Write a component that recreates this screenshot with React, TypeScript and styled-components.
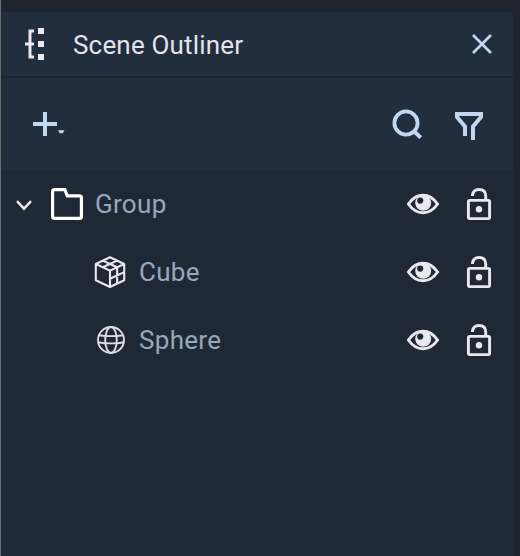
import React from "react";
import styled, { createGlobalStyle } from "styled-components";

const GlobalStyle = createGlobalStyle`
  * { box-sizing: border-box; }
  body { margin: 0; background: #1f252f; font-family: Roboto, sans-serif; }
`;

const Window = styled.main`
  display: flex;
  flex-direction: column;
  height: 556px;
  width: 520px;
  padding: 12px 7px 0 0;
  border-left: 1px solid #6b6d6e;
  background: #1f252f;
  overflow: hidden;
`;

const Header = styled.header`
  display: flex;
  align-items: center;
  height: 64px;
  padding: 0 19px 0 22px;
  background: #222d3d;
  border-radius: 4px 4px 2px 2px;
  margin-bottom: 2px;
`;

const Title = styled.h1`
  flex: 1;
  margin: 2px 0 0 22px;
  color: #e3e4ea;
  font-size: 26px;
  line-height: 32px;
  font-weight: 400;
  letter-spacing: 0.18px;
`;

const Toolbar = styled.div`
  display: flex;
  align-items: center;
  height: 92px;
  padding: 0 28px 0 30px;
  background: #222d3d;
  border-radius: 3px 3px 0 0;
`;

const Spacer = styled.div`
  flex: 1;
`;

const IconButton = styled.button<{ $width: number; $gap?: number }>`
  display: flex;
  flex: none;
  width: ${(p) => p.$width}px;
  height: 36px;
  margin: 0 0 0 ${(p) => p.$gap ?? 0}px;
  padding: 0;
  border: 0;
  background: none;
  color: #c3d7f0;
`;

const Tree = styled.ul`
  flex: 1;
  margin: 0;
  padding: 0;
  list-style: none;
  background: #1e2935;
`;

const Row = styled.li<{ $indent: number }>`
  display: flex;
  align-items: center;
  height: 68px;
  padding: 0 20px 0 ${(p) => p.$indent}px;
`;

const Label = styled.span<{ $gap: number }>`
  flex: 1;
  margin-left: ${(p) => p.$gap}px;
  color: #98a7bd;
  font-size: 26px;
  line-height: 32px;
  letter-spacing: 0.3px;
`;

const Glyph = styled.svg`
  display: block;
  flex: none;
  fill: none;
  stroke: currentColor;
`;

const RowButton = styled(IconButton)`
  color: #ebe7ef;
`;

const Branch = styled.span<{ $gap?: number }>`
  display: flex;
  flex: none;
  color: #ebe7ef;
  margin-left: ${(p) => p.$gap ?? 0}px;
`;

function OutlinerIcon() {
  return (
    <Glyph width="28" height="36" viewBox="0 0 28 36">
      <path d="M11 5H7V31H11M2 18H11" strokeWidth="3" />
      <path d="M15 2h6v6h-6zM15 15h6v6h-6zM15 28h6v6h-6z" fill="currentColor" stroke="none" />
    </Glyph>
  );
}

function CloseIcon() {
  return (
    <Glyph width="24" height="36" viewBox="0 0 24 36">
      <path d="M3 9l18 18M21 9l-18 18" strokeWidth="2.7" />
    </Glyph>
  );
}

function AddIcon() {
  return (
    <Glyph width="36" height="36" viewBox="0 0 36 36">
      <path d="M14 6v24M2 18h24" strokeWidth="4" />
      <path d="M27 24.3h6.5l-1.7 3h-3.1z" fill="currentColor" stroke="none" />
    </Glyph>
  );
}

function SearchIcon() {
  return (
    <Glyph width="36" height="36" viewBox="0 0 36 36">
      <circle cx="17" cy="17" r="11.6" strokeWidth="3.8" />
      <path d="M24.5 25.5l3 2 4.2 4.2" strokeWidth="4" />
    </Glyph>
  );
}

function FilterIcon() {
  return (
    <Glyph width="32" height="36" viewBox="0 0 32 36">
      <path d="M12 30V20.5L4 11V8H28V11L20 20.5V34" strokeWidth="4" />
    </Glyph>
  );
}

function ChevronIcon() {
  return (
    <Glyph width="18" height="20" viewBox="0 0 18 20">
      <path d="M2 7.2l7 7.5 7-7.5" strokeWidth="2.5" />
    </Glyph>
  );
}

function FolderIcon() {
  return (
    <Glyph width="34" height="34" viewBox="0 0 34 34" color="#ffffff">
      <path d="M4.5 2.7H14.8L17.3 8.8H29.5Q31.4 8.8 31.4 10.7V29.5Q31.4 31.4 29.5 31.4H4.5Q2.6 31.4 2.6 29.5V4.6Q2.6 2.7 4.5 2.7Z" strokeWidth="3.2" />
    </Glyph>
  );
}

function CubeIcon() {
  return (
    <Glyph width="34" height="34" viewBox="0 0 34 34">
      <path
        d="M17 2.2L31.2 9V25.3L17 32L2.8 25.3V9ZM2.8 9L17 15.6L31.2 9M17 15.6V32M9.9 5.6L24.1 12.3V28.6M24.1 5.6L9.9 12.3M17 23.8L31.2 17.1"
        strokeWidth="2.1"
        strokeLinejoin="round"
      />
    </Glyph>
  );
}

function SphereIcon() {
  return (
    <Glyph width="34" height="34" viewBox="0 0 34 34" strokeWidth="1.9" color="#dddce4">
      <circle cx="18" cy="17" r="13" />
      <ellipse cx="18" cy="17" rx="5.8" ry="13" />
      <path d="M5.8 12.2Q18 14 30.2 12.2M5 19.2Q18 21.6 31 19.2" />
    </Glyph>
  );
}

function EyeIcon() {
  return (
    <Glyph width="34" height="36" viewBox="0 0 34 36">
      <path d="M2.4 18Q8.5 9.2 17 9.2T31.6 18Q25.5 26.8 17 26.8T2.4 18Z" strokeWidth="2.9" />
      <circle cx="17.2" cy="16.8" r="8" fill="currentColor" stroke="none" />
      <circle cx="14.2" cy="14.6" r="3.1" fill="#1e2935" stroke="none" />
    </Glyph>
  );
}

function UnlockIcon() {
  return (
    <Glyph width="28" height="36" viewBox="0 0 28 36">
      <rect x="3.4" y="14.4" width="21.2" height="18.2" rx="1.3" strokeWidth="2.9" />
      <path d="M7.5 10V9Q8.4 3.5 14 3.5Q20.7 3.5 20.7 10V14" strokeWidth="2.9" />
      <circle cx="14" cy="23.3" r="3.2" fill="currentColor" stroke="none" />
    </Glyph>
  );
}

function RowActions() {
  return (
    <>
      <RowButton $width={34} aria-label="Toggle visibility"><EyeIcon /></RowButton>
      <RowButton $width={28} $gap={25} aria-label="Toggle lock"><UnlockIcon /></RowButton>
    </>
  );
}

export default function App() {
  return (
    <>
      <GlobalStyle />
      <Window>
        <Header>
          <Branch><OutlinerIcon /></Branch>
          <Title>Scene Outliner</Title>
          <IconButton $width={24} aria-label="Close"><CloseIcon /></IconButton>
        </Header>
        <Toolbar>
          <IconButton $width={36} aria-label="Add"><AddIcon /></IconButton>
          <Spacer />
          <IconButton $width={36} aria-label="Search"><SearchIcon /></IconButton>
          <IconButton $width={32} $gap={28} aria-label="Filter"><FilterIcon /></IconButton>
        </Toolbar>
        <Tree>
          <Row $indent={14}>
            <Branch><ChevronIcon /></Branch>
            <Branch $gap={17}><FolderIcon /></Branch>
            <Label $gap={11}>Group</Label>
            <RowActions />
          </Row>
          <Row $indent={92}>
            <Branch><CubeIcon /></Branch>
            <Label $gap={12}>Cube</Label>
            <RowActions />
          </Row>
          <Row $indent={92}>
            <Branch><SphereIcon /></Branch>
            <Label $gap={12}>Sphere</Label>
            <RowActions />
          </Row>
        </Tree>
      </Window>
    </>
  );
}
